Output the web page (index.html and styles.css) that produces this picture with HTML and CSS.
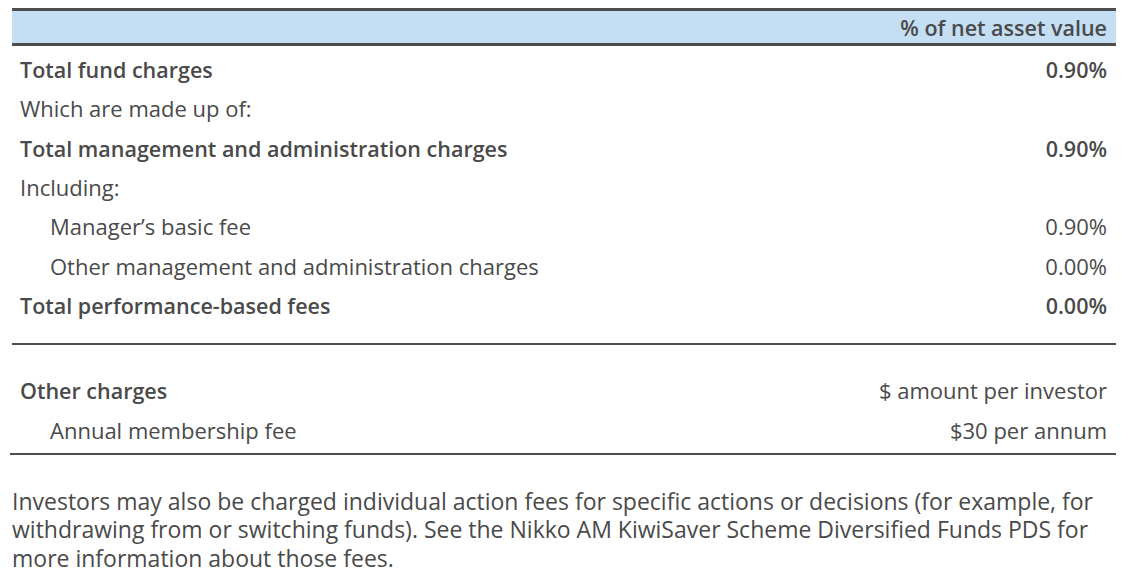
FILE: index.html
```html
<!DOCTYPE html>
<html>
<head>
<meta charset="utf-8">
<link rel="stylesheet" href="styles.css">
</head>
<body>
<div class="page">
  <div class="head">
    <span class="bold">% of net asset value</span>
  </div>
  <div class="section first">
    <div class="row bold"><span>Total fund charges</span><span>0.90%</span></div>
    <div class="row"><span>Which are made up of:</span><span></span></div>
    <div class="row bold"><span>Total management and administration charges</span><span>0.90%</span></div>
    <div class="row"><span>Including:</span><span></span></div>
    <div class="row indent"><span>Manager’s basic fee</span><span>0.90%</span></div>
    <div class="row indent"><span>Other management and administration charges</span><span>0.00%</span></div>
    <div class="row bold"><span>Total performance-based fees</span><span>0.00%</span></div>
  </div>
  <div class="section second">
    <div class="row"><span class="bold">Other charges</span><span>$ amount per investor</span></div>
    <div class="row indent"><span>Annual membership fee</span><span>$30 per annum</span></div>
  </div>
  <p class="note">Investors may also be charged individual action fees for specific actions or decisions (for example, for withdrawing from or switching funds). See the Nikko AM KiwiSaver Scheme Diversified Funds PDS for more information about those fees.</p>
</div>
</body>
</html>
```

FILE: styles.css
```css
html, body {
  margin: 0;
  padding: 0;
  background: #ffffff;
}
body {
  font-family: "Open Sans", "Noto Sans", sans-serif;
  font-size: 22px;
  color: #4a4a4a;
}
.page {
  padding-top: 8px;
  margin-left: 12px;
  width: 1104px;
}
.bold {
  font-weight: 600;
  font-size: 21.5px;
}
.head {
  border-top: 3px solid #4d4d4d;
  border-bottom: 3px solid #4d4d4d;
  background: #c4def3;
  height: 32px;
  display: flex;
  justify-content: flex-end;
  align-items: center;
  padding-right: 9px;
}
.section {
  display: flex;
  flex-direction: column;
}
.section.first {
  padding-top: 4px;
  padding-bottom: 18px;
  border-bottom: 2px solid #4d4d4d;
}
.section.second {
  padding-top: 26px;
  padding-bottom: 3px;
  border-bottom: 2px solid #4d4d4d;
  margin-left: -2px;
  padding-left: 2px;
}
.row {
  display: flex;
  justify-content: space-between;
  align-items: center;
  height: 39.33px;
  line-height: 39.33px;
  padding-left: 8px;
  padding-right: 9px;
}
.row.indent {
  padding-left: 38px;
}
.note {
  margin: 32px 0 0 0;
  font-size: 23px;
  line-height: 28.5px;
}
```
